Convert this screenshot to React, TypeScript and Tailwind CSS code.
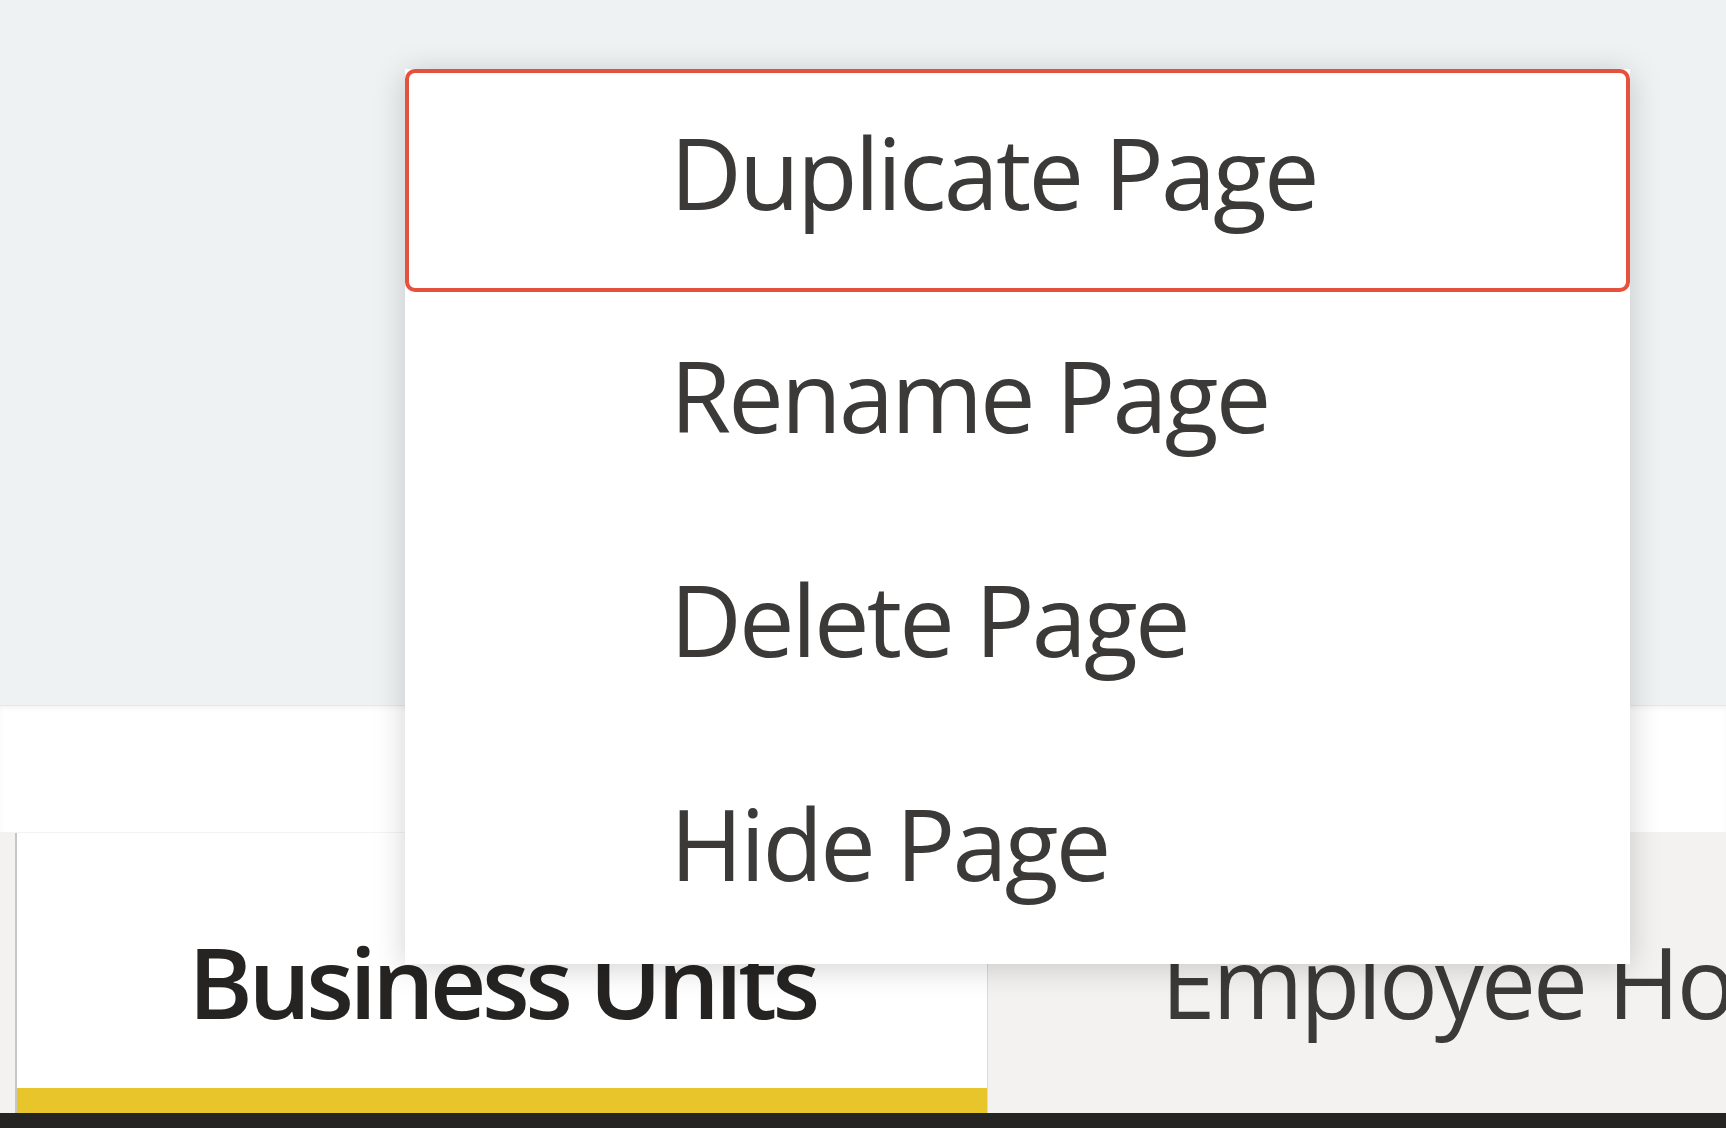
import React from "react";

const items = ["Duplicate Page", "Rename Page", "Delete Page", "Hide Page"];

export default function App() {
  return (
    <div
      className="relative w-[1726px] h-[1128px] overflow-hidden bg-[#eef2f3]"
      style={{ fontFamily: '"Open Sans", "Noto Sans", sans-serif' }}
    >
      <div className="flex flex-col h-full">
        <div className="h-[705px] shrink-0 bg-[#eef2f3]" />
        <div className="h-[127px] shrink-0 bg-white border-t border-[#e4e7e8] shadow-[inset_0_3px_4px_rgba(0,0,0,0.04)]" />
        <div className="flex h-[281px] shrink-0 border-t border-[#f3f3f3]">
          <div className="w-[17px] shrink-0 bg-[#f3f2f1] border-r-2 border-[#c8c6c4]" />
          <div className="w-[970px] shrink-0 bg-white flex flex-col">
            <div className="flex-1 flex items-start justify-center pt-[78px]">
              <span className="text-[98px] leading-[140px] font-semibold tracking-[-4.5px] text-[#252423] whitespace-nowrap">
                Business Units
              </span>
            </div>
            <div className="h-[25px] bg-[#e8c52a]" />
          </div>
          <div className="flex-1 min-w-0 overflow-hidden bg-[#f3f2f1] border-l border-[#dcdad8] pl-[173px] pt-[78px]">
            <span className="text-[98px] leading-[140px] tracking-[-3px] text-[#3b3a39] whitespace-nowrap">
              Employee Hours
            </span>
          </div>
        </div>
        <div className="h-[15px] shrink-0 bg-[#252423]" />
      </div>

      <div className="absolute left-[405px] top-[69px] w-[1225px] bg-white shadow-[0_4px_30px_rgba(0,0,0,0.18)]">
        {items.map((t, i) => (
          <div
            key={t}
            className={
              i === 0
                ? "h-[223px] flex items-center pl-[261px] border-4 border-[#e5513d] rounded-[10px] bg-white"
                : "h-[224px] flex items-center pl-[265px]"
            }
          >
            <span className="text-[99px] leading-[140px] tracking-[-2.8px] text-[#3b3a39] -mt-[18px] whitespace-nowrap">
              {t}
            </span>
          </div>
        ))}
      </div>
    </div>
  );
}
